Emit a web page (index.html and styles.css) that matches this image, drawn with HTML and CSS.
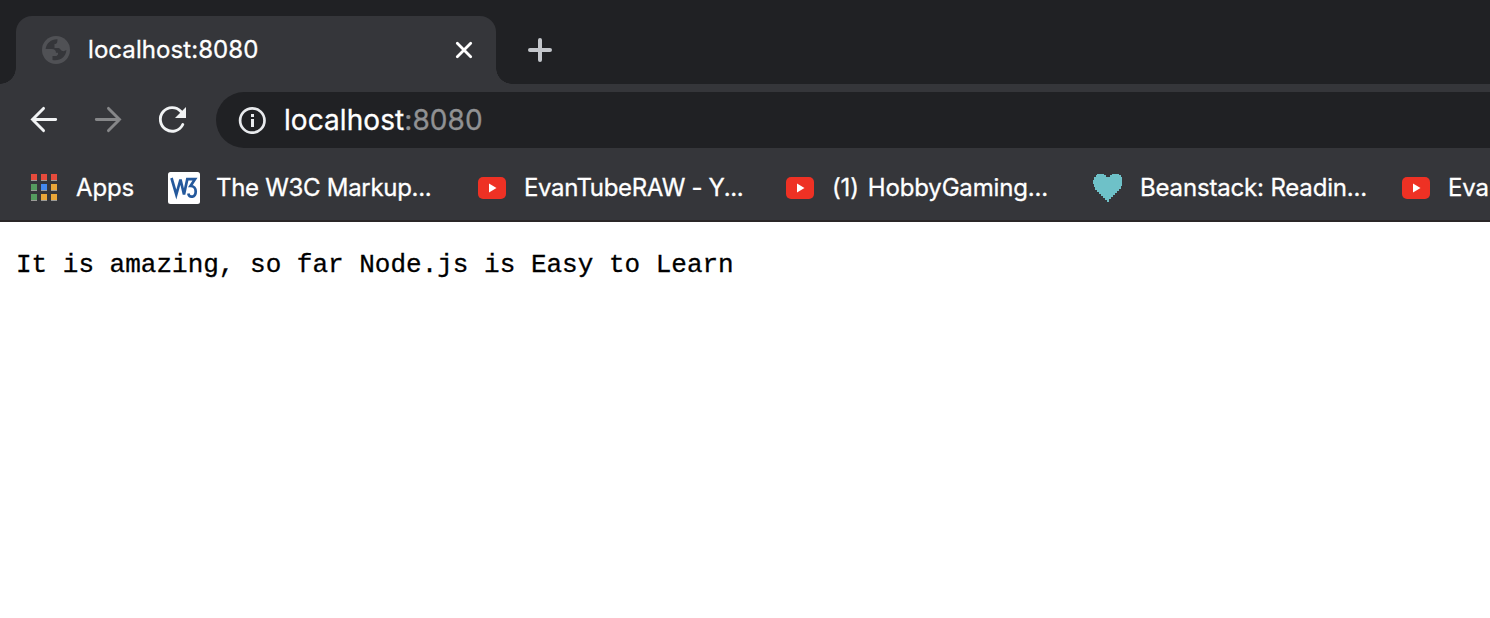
FILE: index.html
```html
<!DOCTYPE html>
<html lang="en">
<head>
<meta charset="utf-8">
<title>localhost:8080</title>
<link rel="stylesheet" href="styles.css">
</head>
<body>
<header class="browser">
  <div class="tab-strip">
    <div class="tab">
      <svg class="globe" width="28" height="28" viewBox="0 0 28 28"><circle cx="14" cy="14" r="14" fill="#505155"/><path d="M15.500 3.300C9.500 3 4.500 7 3.600 13H9.500C12.500 13 14 14.500 14 16.700H16V18.500L14.500 20H10.500V24C17.500 25.500 24 21 24.400 14C22.500 15.500 20 15.500 18.800 14C18.300 13.200 17.500 12 16.500 12H12.500V8H13.500C15 7.500 15.500 6 15.500 3.300Z" fill="#35363a"/></svg>
      <span class="tab-title">localhost:8080</span>
      <svg class="close" width="20" height="20" viewBox="0 0 20 20"><path d="M3.300 3.300 16.700 16.700M16.700 3.300 3.300 16.700" stroke="#fff" stroke-width="2.800" stroke-linecap="round"/></svg>
    </div>
    <svg class="new-tab" width="24" height="24" viewBox="0 0 24 24"><path d="M12 2V22M2 12H22" stroke="#c4c7cc" stroke-width="4" stroke-linecap="round"/></svg>
  </div>
  <div class="toolbar">
    <svg class="nav" width="28" height="28" viewBox="0 0 28 28"><path d="M25.700 13.500H2.500M13.500 2.400 2.500 13.500 13.500 24.600" fill="none" stroke="#f1f3f4" stroke-width="2.900" stroke-linecap="round"/></svg>
    <svg class="nav" width="28" height="28" viewBox="0 0 28 28"><path d="M2.300 13.500H25.500M14.500 2.400 25.500 13.500 14.500 24.600" fill="none" stroke="#868789" stroke-width="2.900" stroke-linecap="round"/></svg>
    <svg class="nav" width="28" height="28" viewBox="0 0 28 28"><path d="M22.900 5.500A11.800 11.800 0 1 0 24.800 18.500" fill="none" stroke="#f1f3f4" stroke-width="2.900" stroke-linecap="round"/><path d="M28 1V12H17Z" fill="#f1f3f4"/></svg>
    <div class="address">
      <svg width="28" height="28" viewBox="0 0 28 28"><circle cx="14.300" cy="14.500" r="12.200" fill="none" stroke="#e8eaed" stroke-width="2.700"/><path d="M13 8H16V11H13ZM13 13H16V21H13Z" fill="#e8eaed"/></svg>
      <span class="url">localhost<span class="port">:8080</span></span>
    </div>
  </div>
  <nav class="bookmarks">
    <a class="bookmark apps">
      <svg class="icon" width="32" height="32" viewBox="0 0 32 32">
        <path d="M3 2H9V9H3ZM13 2H19V9H13ZM23 2H29V9H23ZM3 12H9V19H3ZM13 12H19V19H13ZM23 12H29V19H23ZM3 22H9V29H3ZM13 22H19V29H13ZM23 22H29V29H23Z" fill="#9b9b98"/>
        <path d="M3 2H9V8H3ZM13 2H19V8H13ZM23 2H29V8H23Z" fill="#e54b3c"/>
        <path d="M3 12H9V18H3ZM3 22H9V28H3Z" fill="#559c5f"/>
        <path d="M13 12H19V18H13Z" fill="#4489ee"/>
        <path d="M23 12H29V18H23ZM13 22H19V28H13ZM23 22H29V28H23Z" fill="#e9a638"/>
      </svg>
      <span class="label">Apps</span>
    </a>
    <a class="bookmark w3c">
      <svg class="icon" width="32" height="32" viewBox="0 0 32 32"><rect width="32" height="32" rx="2.500" fill="#fff"/><path d="M3.500 6 8.300 22.500 12.500 7.500 16 22.500 19.300 7.200H27L22.500 14C26 14 27.700 16.500 27.700 19.500C27.700 25.500 21.500 26.500 20.300 21.500" fill="none" stroke="#24599c" stroke-width="2.700"/></svg>
      <span class="label">The W3C Markup...</span>
    </a>
    <a class="bookmark evan">
      <svg class="icon" width="32" height="32" viewBox="0 0 32 32"><rect x="2" y="5" width="28" height="22" rx="5" fill="#ee3124"/><path d="M13 11.500 20.500 16 13 20.500Z" fill="#fff"/></svg>
      <span class="label">EvanTubeRAW - Y...</span>
    </a>
    <a class="bookmark hobby">
      <svg class="icon" width="32" height="32" viewBox="0 0 32 32"><rect x="2" y="5" width="28" height="22" rx="5" fill="#ee3124"/><path d="M13 11.500 20.500 16 13 20.500Z" fill="#fff"/></svg>
      <span class="label">(1) HobbyGaming...</span>
    </a>
    <a class="bookmark bean">
      <svg class="icon" width="32" height="32" viewBox="0 0 32 32"><path d="M5 2H12V3H14V5H18V3H20V2H27V3H29V5H30V14H29V17H27V19H25V21H23V23H21V25H19V27H17V30H15V28H13V26H11V24H9V22H7V20H5V18H3V15H2V12H1V8H2V5H4V3H5Z" fill="#6ec1c8"/></svg>
      <span class="label">Beanstack: Readin...</span>
    </a>
    <a class="bookmark last">
      <svg class="icon" width="32" height="32" viewBox="0 0 32 32"><rect x="2" y="5" width="28" height="22" rx="5" fill="#ee3124"/><path d="M13 11.500 20.500 16 13 20.500Z" fill="#fff"/></svg>
      <span class="label">Eva</span>
    </a>
  </nav>
</header>
<main class="page"><pre class="output">It is amazing, so far Node.js is Easy to Learn</pre></main>
</body>
</html>
```
FILE: styles.css
```css
* { box-sizing: border-box; }
body {
  margin: 0;
  height: 618px;
  overflow: hidden;
  background: #fff;
  font-family: Inter, "Liberation Sans", sans-serif;
  -webkit-text-stroke: 0.3px currentColor;
}
svg { display: block; flex: none; }
.browser { height: 222px; background: #35363a; border-bottom: 2px solid #2a2627; overflow: hidden; }
.tab-strip { display: flex; align-items: flex-end; height: 84px; padding-left: 16px; background: #202124; }
.tab {
  position: relative;
  display: flex;
  align-items: center;
  width: 480px;
  height: 68px;
  padding: 0 22px 0 26px;
  border-radius: 16px 16px 0 0;
  background: #35363a;
}
.tab::before, .tab::after {
  content: "";
  position: absolute;
  bottom: 0;
  width: 16px;
  height: 16px;
}
.tab::before { right: 100%; background: radial-gradient(circle at 0 0, transparent 15.5px, #35363a 16px); }
.tab::after { left: 100%; background: radial-gradient(circle at 100% 0, transparent 15.5px, #35363a 16px); }
.tab-title { margin-left: 18px; color: #fff; font-size: 24px; line-height: 30px; letter-spacing: 0.07px; }
.close { margin-left: auto; }
.new-tab { margin: 0 0 22px 32px; }
.toolbar { display: flex; align-items: center; height: 72px; padding-left: 30px; }
.nav { margin-right: 36px; }
.address {
  display: flex;
  flex: 1;
  align-items: center;
  gap: 18px;
  height: 56px;
  margin-left: -6px;
  padding-left: 22px;
  border-radius: 28px 0 0 28px;
  background: #202124;
}
.url { color: #fff; font-size: 28px; line-height: 34px; letter-spacing: 0.07px; }
.port { color: #909193; }
.bookmarks { display: flex; align-items: center; height: 64px; padding-left: 28px; }
.bookmark { display: flex; flex: none; align-items: center; gap: 16px; color: #fff; }
.label { font-size: 24px; line-height: 30px; white-space: nowrap; letter-spacing: -0.17px; }
.apps { width: 140px; }
.w3c, .evan, .hobby, .bean { width: 308px; }
.w3c .label { letter-spacing: -0.3px; }
.evan .label { letter-spacing: -0.34px; }
.hobby .label { letter-spacing: -0.17px; word-spacing: 2.5px; }
.page { padding: 27px 16px; }
.output { margin: 0; color: #000; font: 26px/32px "Liberation Mono", monospace; }
```
